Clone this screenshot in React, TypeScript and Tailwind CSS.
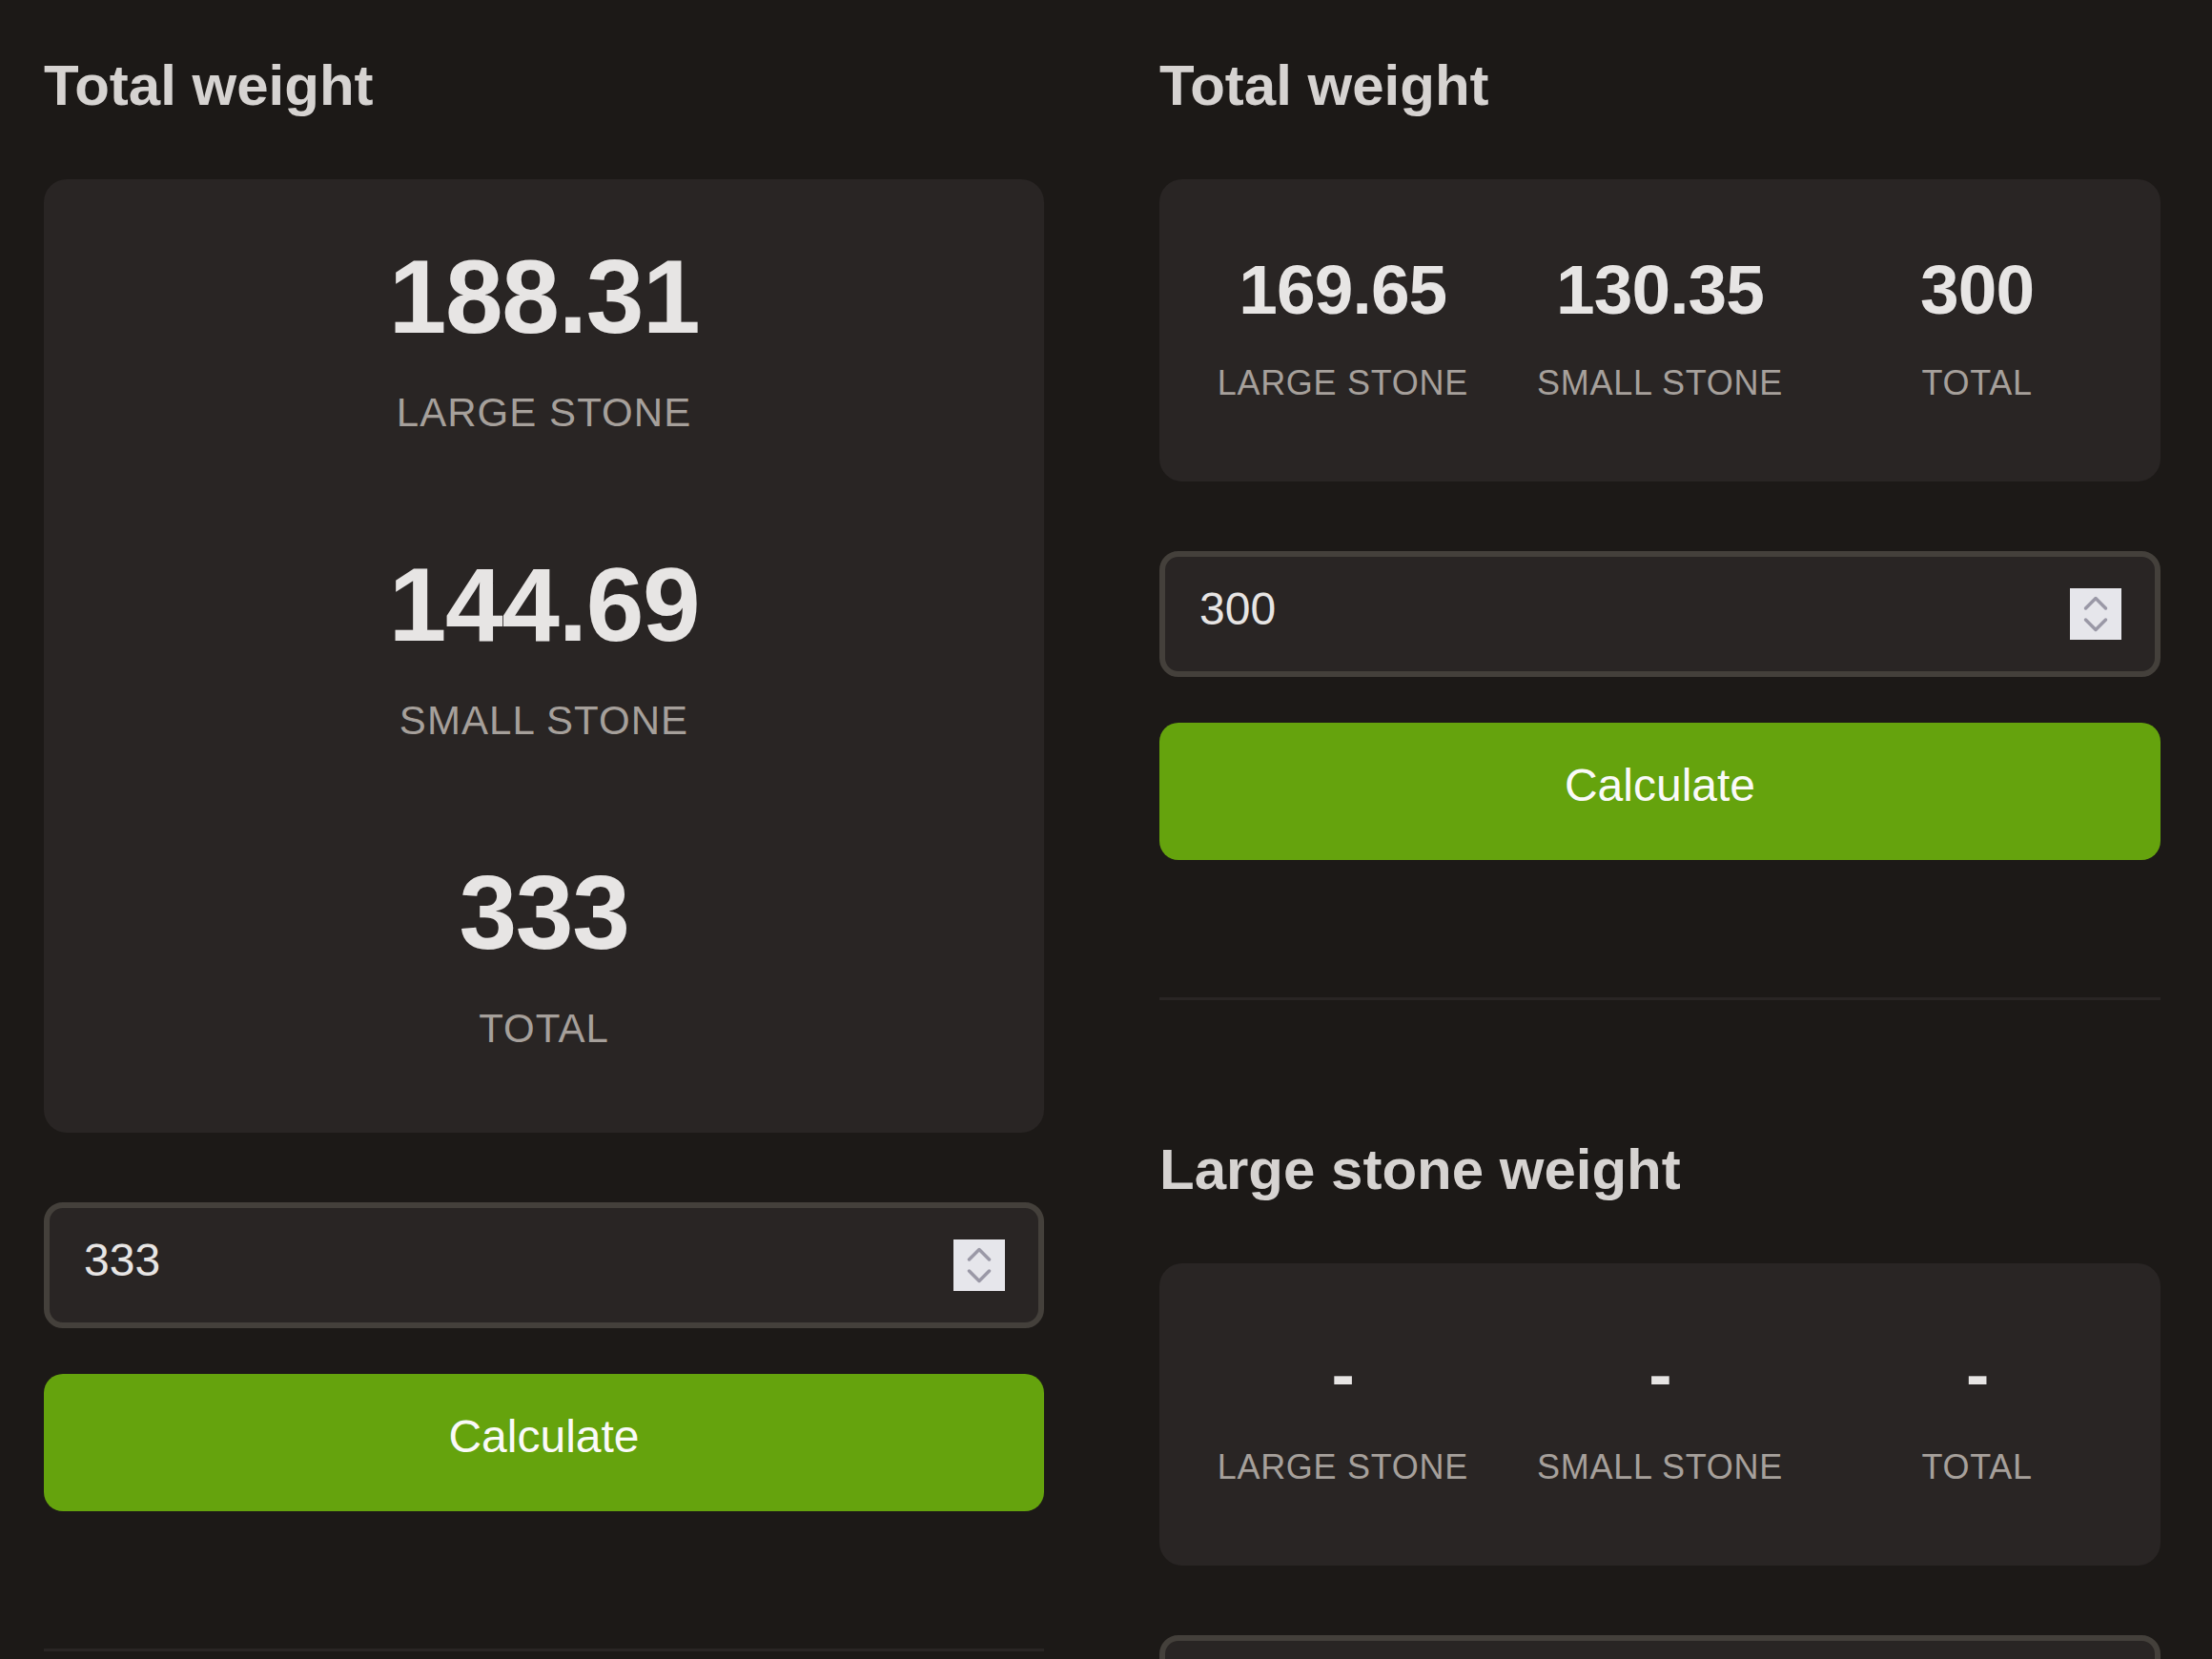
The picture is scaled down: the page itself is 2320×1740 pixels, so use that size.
import React from "react";

type Stat = { value: string; label: string };

function Stepper() {
  return (
    <div className="mr-[35px] flex h-[54px] w-[54px] shrink-0 items-center justify-center bg-[#e6e6eb]">
      <svg viewBox="0 0 54 54" className="h-[54px] w-[54px]" fill="none" stroke="#9a98a6" strokeWidth="3.5" strokeLinecap="round" strokeLinejoin="round">
        <path d="M16.5 21 L27 10.5 L37.5 21" />
        <path d="M16.5 33 L27 43.5 L37.5 33" />
      </svg>
    </div>
  );
}

function NumberInput({ value }: { value: string }) {
  return (
    <div className="mt-[73px] flex h-[132px] items-center rounded-[20px] border-[6px] border-stone-700 bg-stone-800">
      <input
        type="text"
        inputMode="decimal"
        defaultValue={value}
        className="h-full min-w-0 flex-1 bg-transparent pb-[12px] pl-[36px] text-[48px] text-stone-200 outline-none"
      />
      <Stepper />
    </div>
  );
}

function CalcButton() {
  return (
    <button className="mt-[48px] flex h-[144px] w-full items-center justify-center rounded-[20px] bg-[#65a30d] pb-[12px] text-[48px] text-stone-50">
      Calculate
    </button>
  );
}

function StackCard({ stats }: { stats: Stat[] }) {
  return (
    <div className="flex flex-col gap-[116px] rounded-3xl bg-stone-800 pt-[69px] pb-[78px]">
      {stats.map((s) => (
        <div key={s.label} className="flex flex-col items-center">
          <span className="text-[109px] font-bold leading-none tracking-[-0.012em] text-stone-200">{s.value}</span>
          <span className="mt-[35px] text-[42px] uppercase leading-[63px] tracking-wide text-stone-400">{s.label}</span>
        </div>
      ))}
    </div>
  );
}

function RowCard({ stats }: { stats: Stat[] }) {
  return (
    <div className="grid grid-cols-3 rounded-3xl bg-stone-800 px-[26px] pt-[79px] pb-[76px]">
      {stats.map((s) => (
        <div key={s.label} className="flex flex-col items-center">
          <span className="text-[73px] font-bold leading-none tracking-[-0.012em] text-stone-200">{s.value}</span>
          <span className="mt-[35px] text-[36px] uppercase leading-[54px] tracking-[0.02em] text-stone-400">{s.label}</span>
        </div>
      ))}
    </div>
  );
}

function Title({ children }: { children: React.ReactNode }) {
  return <h2 className="mb-[62px] text-[60px] font-bold leading-[72px] text-stone-300">{children}</h2>;
}

const Divider = () => <div className="mt-[144px] mb-[142px] h-[3px] bg-stone-800" />;

export default function App() {
  return (
    <div className="min-h-screen bg-stone-900 font-['Liberation_Sans',Arial,sans-serif]">
      <div className="flex gap-[121px] pt-[54px] pl-[46px]">
        <div className="w-[1049px]">
          <section>
            <Title>Total weight</Title>
            <StackCard
              stats={[
                { value: "188.31", label: "Large stone" },
                { value: "144.69", label: "Small stone" },
                { value: "333", label: "Total" },
              ]}
            />
            <NumberInput value="333" />
            <CalcButton />
          </section>
          <Divider />
        </div>

        <div className="w-[1050px]">
          <section>
            <Title>Total weight</Title>
            <RowCard
              stats={[
                { value: "169.65", label: "Large stone" },
                { value: "130.35", label: "Small stone" },
                { value: "300", label: "Total" },
              ]}
            />
            <NumberInput value="300" />
            <CalcButton />
          </section>
          <Divider />
          <section>
            <Title>Large stone weight</Title>
            <RowCard
              stats={[
                { value: "-", label: "Large stone" },
                { value: "-", label: "Small stone" },
                { value: "-", label: "Total" },
              ]}
            />
            <NumberInput value="" />
          </section>
        </div>
      </div>
    </div>
  );
}
